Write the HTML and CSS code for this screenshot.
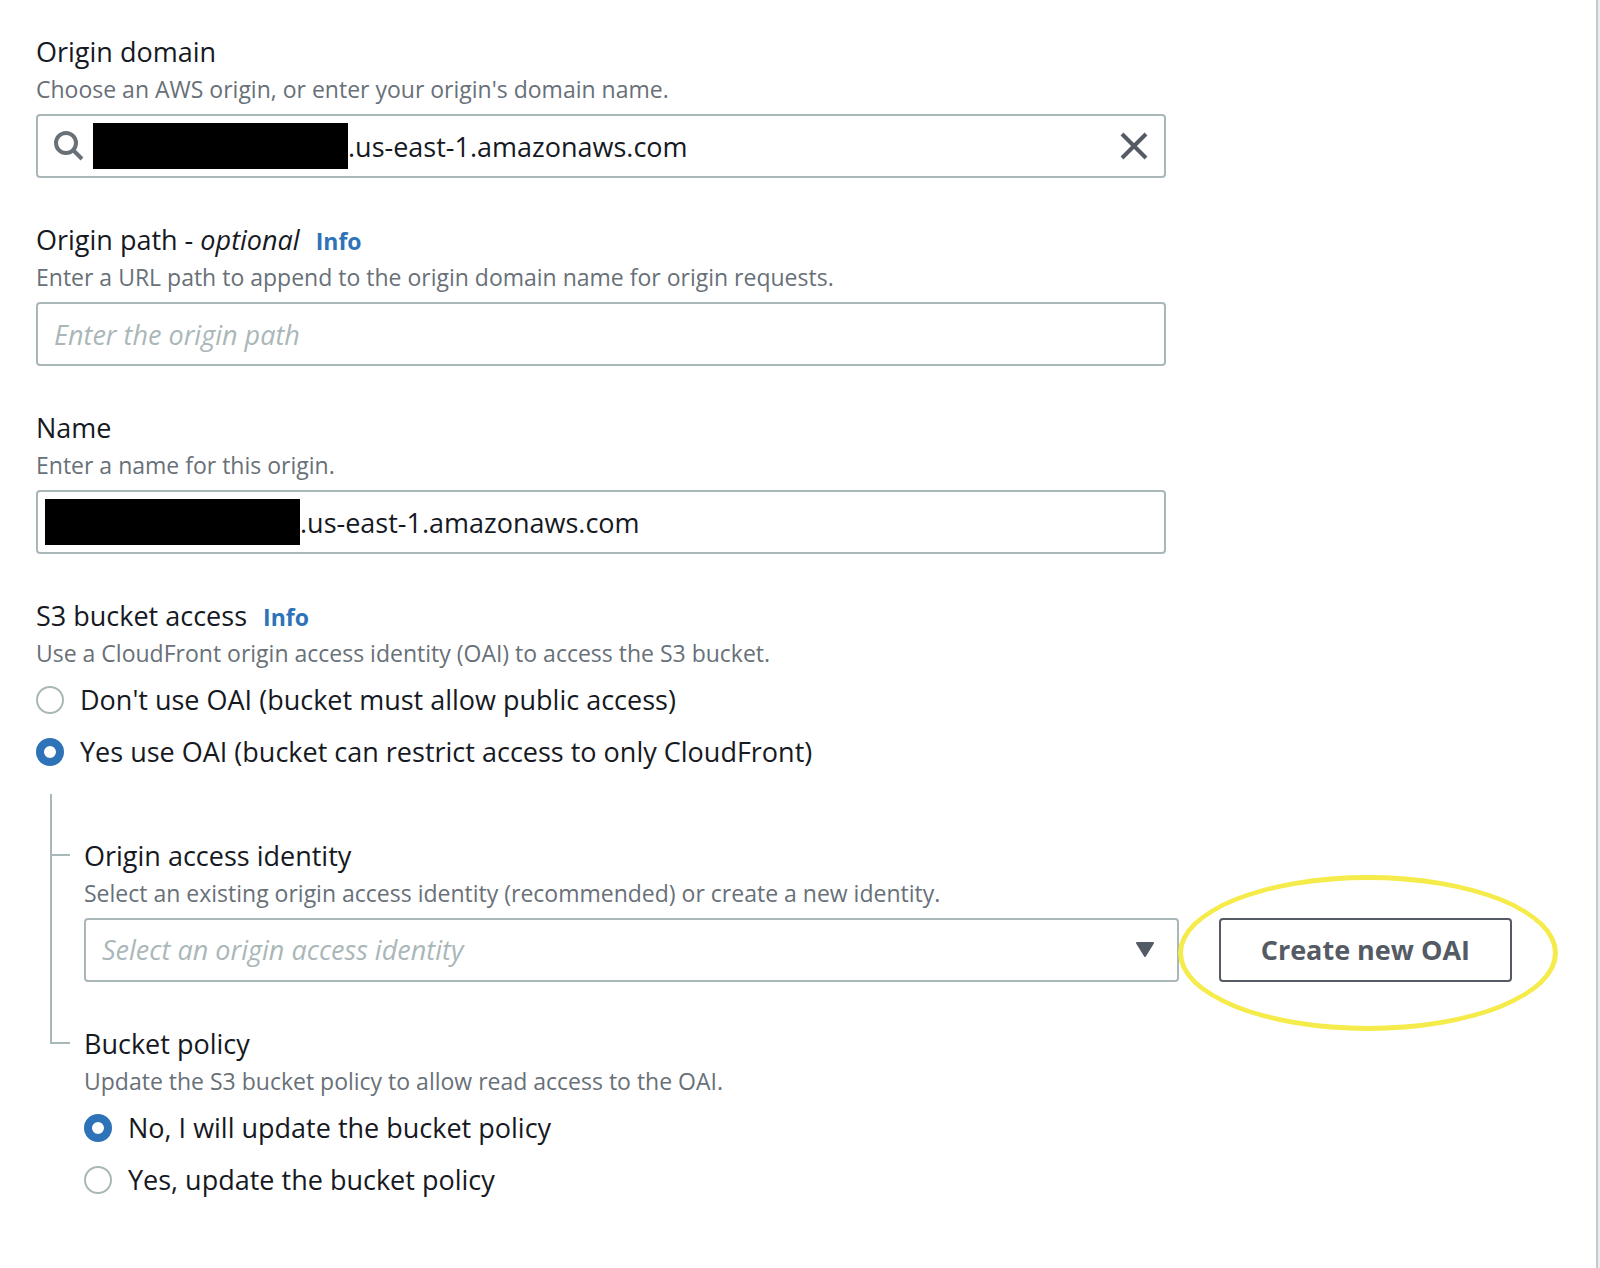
FILE: index.html
```
<!DOCTYPE html>
<html lang="en">
<head>
    <meta charset="UTF-8">
    <meta name="viewport" content="width=device-width, initial-scale=1.0">
    <title>Create origin</title>
    <link rel="stylesheet" href="styles.css">
</head>
<body>
    <main class="panel">
        <div class="field">
            <label class="label" for="originDomain">Origin domain</label>
            <p class="hint">Choose an AWS origin, or enter your origin's domain name.</p>
            <div class="box search-box">
                <svg class="search-icon" viewBox="0 0 30 30" aria-hidden="true">
                    <circle cx="12" cy="12" r="10"/>
                    <path d="M19 19l9 9"/>
                </svg>
                <span class="redacted"></span>
                <input type="text" id="originDomain" value=".us-east-1.amazonaws.com">
                <button type="button" class="clear" aria-label="Clear">
                    <svg viewBox="0 0 28 28"><path d="M2 2l24 24M26 2L2 26"/></svg>
                </button>
            </div>
        </div>

        <div class="field">
            <div class="label-row">
                <label class="label" for="originPath">Origin path - <i>optional</i></label>
                <a class="info" href="#">Info</a>
            </div>
            <p class="hint">Enter a URL path to append to the origin domain name for origin requests.</p>
            <div class="box">
                <input type="text" id="originPath" placeholder="Enter the origin path">
            </div>
        </div>

        <div class="field">
            <label class="label" for="originName">Name</label>
            <p class="hint">Enter a name for this origin.</p>
            <div class="box name-box">
                <span class="redacted"></span>
                <input type="text" id="originName" value=".us-east-1.amazonaws.com">
            </div>
        </div>

        <div role="radiogroup" aria-labelledby="accessLabel">
            <div class="label-row">
                <span class="label" id="accessLabel">S3 bucket access</span>
                <a class="info" href="#">Info</a>
            </div>
            <p class="hint">Use a CloudFront origin access identity (OAI) to access the S3 bucket.</p>
            <div class="radios">
                <label class="radio"><input type="radio" name="access">Don't use OAI (bucket must allow public access)</label>
                <label class="radio"><input type="radio" name="access" checked>Yes use OAI (bucket can restrict access to only CloudFront)</label>
            </div>
        </div>

        <div class="tree">
            <div class="branch">
                <label class="label" for="identity">Origin access identity</label>
                <p class="hint">Select an existing origin access identity (recommended) or create a new identity.</p>
                <div class="identity-row">
                    <div class="box select-box">
                        <select id="identity">
                            <option>Select an origin access identity</option>
                        </select>
                        <svg class="caret" viewBox="0 0 20 16" aria-hidden="true"><path d="M2 1h16l-8 13z"/></svg>
                    </div>
                    <div class="highlight">
                        <button type="button" class="create">Create new OAI</button>
                    </div>
                </div>
            </div>
            <div class="branch last" role="radiogroup" aria-labelledby="policyLabel">
                <span class="label" id="policyLabel">Bucket policy</span>
                <p class="hint">Update the S3 bucket policy to allow read access to the OAI.</p>
                <div class="radios">
                    <label class="radio"><input type="radio" name="policy" checked>No, I will update the bucket policy</label>
                    <label class="radio"><input type="radio" name="policy">Yes, update the bucket policy</label>
                </div>
            </div>
        </div>
    </main>
</body>
</html>
```
FILE: styles.css
```
* {
    box-sizing: border-box;
}

body {
    margin: 0;
    background-color: #eaeded;
    color: #16191f;
    font-family: "Open Sans", "Noto Sans", sans-serif;
    font-size: 27px;
    font-weight: 500;
    line-height: 44px;
}

.panel {
    min-height: 100vh;
    margin-right: 2px;
    padding: 30px 84px 30px 36px;
    background-color: #fff;
    border-right: 2px solid #c4cacd;
}

.field {
    max-width: 1130px;
    margin-bottom: 40px;
}

.label {
    display: block;
}

.label-row {
    display: flex;
    align-items: baseline;
    gap: 16px;
}

.info {
    color: #2e73b8;
    font-size: 23px;
    font-weight: bold;
    line-height: 30px;
    text-decoration: none;
}

.hint {
    margin: 0;
    color: #687078;
    font-size: 23px;
    line-height: 30px;
}

/* Text boxes */
.box {
    display: flex;
    align-items: center;
    height: 64px;
    margin-top: 10px;
    padding: 0 16px;
    background-color: #fff;
    border: 2px solid #aab7b8;
    border-radius: 4px;
}

.box input,
.box select {
    flex: 1;
    min-width: 0;
    height: 100%;
    padding: 0;
    border: none;
    outline: none;
    background: none;
    color: inherit;
    font: inherit;
}

.box input::placeholder {
    color: #aab7b8;
    font-style: italic;
    opacity: 1;
}

.redacted {
    width: 255px;
    height: 46px;
    background-color: #000;
}

.search-icon {
    width: 30px;
    height: 30px;
    margin-right: 9px;
    fill: none;
    stroke: #687078;
    stroke-width: 4;
}

.name-box {
    padding-left: 7px;
}

.clear {
    width: 28px;
    height: 28px;
    padding: 0;
    border: none;
    background: none;
    cursor: pointer;
}

.clear svg {
    display: block;
    fill: none;
    stroke: #545b64;
    stroke-width: 4;
}

/* Radio buttons */
.radios {
    display: grid;
    gap: 8px;
    margin-top: 10px;
}

.radio {
    display: flex;
    align-items: center;
    gap: 16px;
}

.radio input {
    appearance: none;
    width: 28px;
    height: 28px;
    margin: 0;
    background-color: #fff;
    border: 2px solid #aab7b8;
    border-radius: 50%;
}

.radio input:checked {
    border: 8px solid #2e73b8;
}

/* Nested options joined by a line */
.tree {
    margin: 20px 0 0 14px;
}

.branch {
    position: relative;
    padding: 40px 0 40px 32px;
    border-left: 2px solid #aab7b8;
}

.branch::before {
    content: "";
    position: absolute;
    top: 60px;
    left: 0;
    width: 18px;
    border-top: 2px solid #aab7b8;
}

.branch.last {
    padding: 0 0 0 34px;
    border-left: none;
}

.branch.last::before {
    top: 0;
    height: 20px;
    border-top: none;
    border-left: 2px solid #aab7b8;
    border-bottom: 2px solid #aab7b8;
}

.identity-row {
    display: flex;
    gap: 40px;
    margin-top: 10px;
}

.select-box {
    position: relative;
    flex: 1;
    margin-top: 0;
    padding: 0;
}

.select-box select {
    appearance: none;
    padding: 0 56px 0 16px;
    color: #aab7b8;
    font-style: italic;
}

.caret {
    position: absolute;
    right: 22px;
    width: 20px;
    height: 16px;
    fill: #545b64;
    stroke: #545b64;
    stroke-width: 2;
    stroke-linejoin: round;
    pointer-events: none;
}

.create {
    height: 64px;
    padding: 0 40px;
    background-color: #fff;
    border: 2px solid #545b64;
    border-radius: 4px;
    color: #545b64;
    font: inherit;
    font-weight: bold;
    cursor: pointer;
}

.highlight {
    position: relative;
}

.highlight::after {
    content: "";
    position: absolute;
    inset: -43px -46px -49px -41px;
    border: 5px solid #f5eb4b;
    border-radius: 50%;
    pointer-events: none;
}
```
